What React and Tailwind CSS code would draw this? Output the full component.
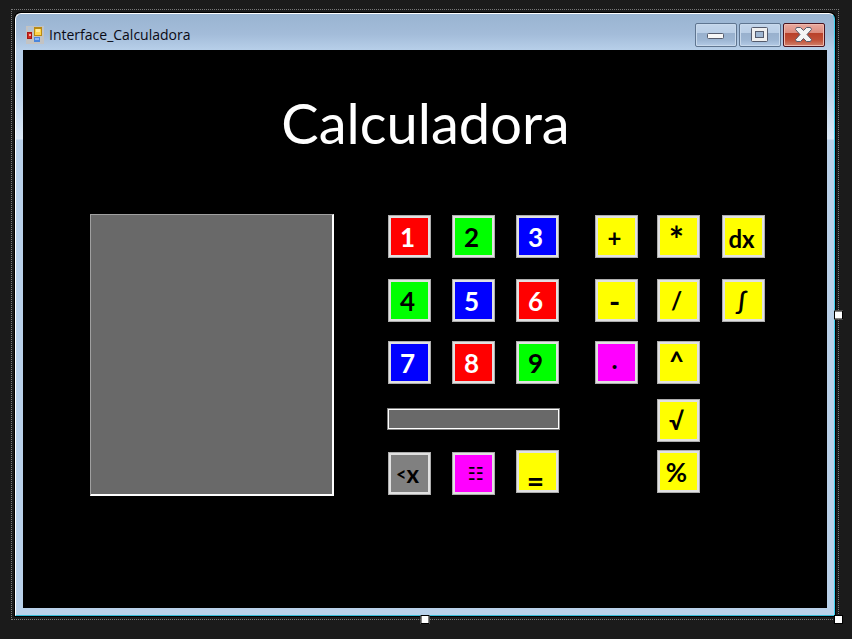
import React from "react";

const RED = "bg-[#ff0000] text-white";
const GREEN = "bg-[#00ff00] text-black";
const BLUE = "bg-[#0000ff] text-white";
const YELLOW = "bg-[#ffff00] text-black";
const MAGENTA = "bg-[#ff00ff] text-black";
const GRAY = "bg-[#808080] text-black";

const digits = [
  ["1", RED], ["2", GREEN], ["3", BLUE],
  ["4", GREEN], ["5", BLUE], ["6", RED],
  ["7", BLUE], ["8", RED], ["9", GREEN],
];

const operators = [
  { text: "+", label: "Somar", tone: YELLOW, size: "text-[24px]", align: "items-center pt-0.5" },
  { text: "*", label: "Multiplicar", tone: YELLOW, size: "text-[36px]", align: "items-center pt-1" },
  { text: "dx", label: "Derivada", tone: YELLOW, size: "text-[24px]", align: "items-center pt-1" },
  { text: "-", label: "Subtrair", tone: YELLOW, size: "text-[30px]" },
  { text: "/", label: "Dividir", tone: YELLOW, size: "text-[24px]" },
  { text: "∫", label: "Integral", tone: YELLOW, size: "text-[24px]" },
  { text: ".", label: "Ponto decimal", tone: MAGENTA, size: "text-[26px]", align: "items-center pb-2" },
  { text: "^", label: "Potência", tone: YELLOW, size: "text-[26px]", align: "items-center pb-1" },
  null,
  null,
  { text: "√", label: "Raiz quadrada", tone: YELLOW, size: "text-[24px]" },
  null,
  null,
  { text: "%", label: "Porcentagem", tone: YELLOW, size: "text-[26px]" },
];

function Key({ children, label, tone, size = "text-[26px]", align = "items-center" }) {
  return (
    <button
      type="button"
      aria-label={label}
      className={`size-[43px] shrink-0 border border-[#adadad] bg-[#e1e1e1] p-0.5 font-bold leading-none ${size}`}
    >
      <span className={`flex size-full justify-center pr-1 ${align} ${tone}`}>{children}</span>
    </button>
  );
}

function FormIcon() {
  return (
    <svg viewBox="0 0 18 18" className="size-[18px]" aria-hidden="true">
      <rect width="18" height="18" fill="#c3c3c3" />
      <rect x="2" y="1" width="5" height="4" fill="#b4c4d6" />
      <rect x="8" y="1" width="8" height="9" fill="#b98a12" />
      <rect x="9" y="3" width="6" height="6" fill="#ffd54a" />
      <rect x="10" y="3" width="4" height="3" fill="#ffe995" />
      <rect x="1" y="6" width="5" height="7" fill="#a81616" />
      <rect x="2" y="7" width="3" height="5" fill="#d22a20" />
      <rect x="3" y="8" width="2" height="2" fill="#f6a79c" />
      <rect x="8" y="11" width="6" height="5" fill="#4b86dc" />
      <rect x="9" y="12" width="4" height="2" fill="#8fb8f5" />
    </svg>
  );
}

function CaptionButton({ label, danger, children }) {
  return (
    <button
      type="button"
      aria-label={label}
      className={`flex h-6 w-[42px] items-center justify-center rounded-[2px] border ${
        danger
          ? "border-[#4a1420] bg-[linear-gradient(to_bottom,#e9aaa0_0px,#dc8b7d_9px,#b8402a_9px,#c05038_16px,#d0816c_22px)] shadow-[inset_0_0_0_1px_#efb9ad]"
          : "border-[#5f7590] bg-[linear-gradient(to_bottom,#c3d5ea_0px,#b9cee6_9px,#98b0cd_9px,#9db6d3_16px,#b4cbe6_22px)] shadow-[inset_0_0_0_1px_#c8d9ec]"
      }`}
    >
      {children}
    </button>
  );
}

function TitleBar() {
  return (
    <header className="flex h-9 items-start justify-between px-[7px]">
      <div className="flex items-center gap-[5px] pl-[3px] pt-3">
        <FormIcon />
        <span className="font-['Segoe_UI','Open_Sans',sans-serif] text-[14px] leading-[18px] text-[#0a0a14]">
          Interface_Calculadora
        </span>
      </div>
      <div className="flex gap-0.5 pr-0.5 pt-[9px]">
        <CaptionButton label="Minimizar">
          <svg viewBox="0 0 18 18" className="size-[18px]" aria-hidden="true">
            <rect x="0.5" y="7.5" width="16" height="5" rx="1" fill="#f7f7f7" stroke="#555b6c" />
          </svg>
        </CaptionButton>
        <CaptionButton label="Maximizar">
          <svg viewBox="0 0 18 18" className="size-[18px]" aria-hidden="true">
            <rect x="0.5" y="1.5" width="16" height="14" rx="1" fill="#f0f0f0" stroke="#555b6c" />
            <rect x="4.5" y="5.5" width="8" height="6" fill="#a0b7d2" stroke="#555b6c" />
          </svg>
        </CaptionButton>
        <CaptionButton label="Fechar" danger>
          <svg viewBox="0 0 18 18" className="size-[18px]" aria-hidden="true">
            <path
              d="M1.5 1.5H5.5L8.5 4.5L11.5 1.5H15.5L16.5 3.5L12 8.5L16.5 13.5L15.500 15.500H11.500L8.500 12.500L5.500 15.500H1.500L0.500 13.500L5 8.500L0.500 3.500Z"
              fill="#f4f4f4"
              stroke="#555b6c"
              strokeLinejoin="round"
            />
          </svg>
        </CaptionButton>
      </div>
    </header>
  );
}

function Calculator() {
  return (
    <main className="flex-1 bg-black pb-16 pl-[67px] pr-[62px] font-['Comic_Sans_MS','Lato','DejaVu_Sans',sans-serif]">
      <h1 className="flex h-[164px] items-start justify-center pr-1 pt-[38px] text-[56px] leading-[70px] text-white">
        Calculadora
      </h1>
      <div className="flex items-start">
        <textarea
          readOnly
          aria-label="Histórico"
          className="h-[282px] min-w-0 flex-1 resize-none border-b-2 border-l border-r-2 border-t border-b-white border-l-[#a0a0a0] border-r-white border-t-[#a0a0a0] bg-[#696969] outline-none"
        />
        <div className="ml-[53px] w-[173px] pt-px">
          <div className="grid grid-cols-3 grid-rows-[64px_62px_43px] justify-items-center gap-x-[21px] px-px">
            {digits.map(([digit, tone]) => (
              <Key key={digit} label={digit} tone={tone}>
                {digit}
              </Key>
            ))}
          </div>
          <input
            type="text"
            readOnly
            aria-label="Entrada"
            className="mt-6 block h-[22px] w-full border border-[#808080] bg-[#696969] shadow-[inset_0_0_0_1px_#ffffff] outline-none"
          />
          <div className="flex justify-between px-px pt-5">
            <div className="flex gap-[21px] pt-0.5">
              <Key label="Apagar" tone={GRAY} size="text-[24px]">
                <span className="flex items-center">
                  <span className="text-[18px]">&lt;</span>x
                </span>
              </Key>
              <Key label="Limpar" tone={MAGENTA} size="text-[18px]">
                <span className="pl-2 font-['DejaVu_Sans',sans-serif] font-normal">☷</span>
              </Key>
            </div>
            <Key label="Igual" tone={YELLOW} size="text-[30px]" align="items-center pt-4">
              =
            </Key>
          </div>
        </div>
        <div className="ml-[35px] grid grid-cols-[62px_65px_43px] grid-rows-[64px_62px_58px_51px_43px] pt-px">
          {operators.map((op, i) =>
            op ? (
              <Key key={op.text} label={op.label} tone={op.tone} size={op.size} align={op.align}>
                {op.text}
              </Key>
            ) : (
              <span key={i} />
            )
          )}
        </div>
      </div>
    </main>
  );
}

export default function App() {
  return (
    <div className="flex min-h-screen flex-col bg-[#1b1b1b] pb-[19px] pl-[11px] pr-[13px] pt-[9px]">
      <div className="relative flex flex-1 flex-col border border-dotted border-[#7a7a7a] p-0.5">
        <div className="flex flex-1 flex-col rounded-t-md border border-black bg-black">
          <div className="flex flex-1 flex-col rounded-t-md border border-b-[#35bcd8] border-l-white border-r-[#3cd2f2] border-t-white bg-[linear-gradient(to_bottom,#99b4d1_0px,#a3bcd9_20px,#b7cfe9_36px,#b9d1ea_76px,#dde9f7_125px,#b9d1ea_126px)]">
            <TitleBar />
            <div className="flex flex-1 flex-col px-[7px] pb-[7px]">
              <Calculator />
            </div>
          </div>
        </div>
        <span className="absolute -right-[5px] top-1/2 size-[9px] -translate-y-1/2 border border-black bg-white" />
        <span className="absolute -bottom-[5px] left-1/2 size-[9px] -translate-x-1/2 border border-black bg-white" />
        <span className="absolute -bottom-[5px] -right-[5px] size-[9px] border border-black bg-white" />
      </div>
    </div>
  );
}
